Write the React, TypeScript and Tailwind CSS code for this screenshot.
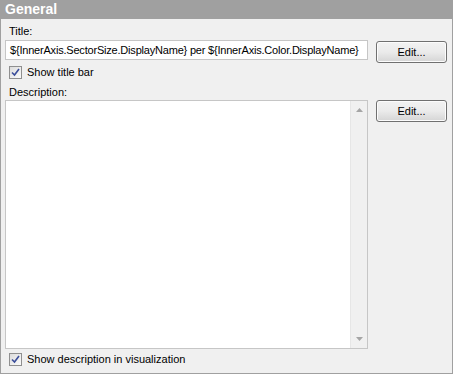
import React from "react";

function Check() {
  return (
    <div className="w-[13px] h-[13px] border border-[#8f8f8f] bg-gradient-to-br from-[#dcdcdc] to-[#fbfbfb] flex items-center justify-center shrink-0">
      <svg width="9" height="9" viewBox="0 0 9 9">
        <path d="M1 4.5 L3.5 7 L8 1" fill="none" stroke="#3a4d9a" strokeWidth="1.6" />
      </svg>
    </div>
  );
}

function EditButton() {
  return (
    <button className="w-[71px] h-[22px] rounded-[3px] border border-[#707070] bg-gradient-to-b from-[#f2f2f2] via-[#ebebeb] to-[#d5d5d5] text-[11px] text-black flex items-center justify-center shadow-[inset_0_0_0_1px_#fcfcfc]">
      Edit...
    </button>
  );
}

export default function App() {
  return (
    <div className="w-[453px] h-[374px] bg-[#f0f0f0] flex flex-col text-[11px] text-black" style={{ fontFamily: '"Liberation Sans", Arial, sans-serif' }}>
      <div className="h-[19px] bg-[#a0a0a0] text-white font-bold text-[14px] leading-[19px] pl-[5px] shrink-0">General</div>
      <div className="flex-1 border-x border-b border-[#a0a0a0] flex flex-col pl-[4px] pr-[4px] min-h-0">
        <div className="mt-[6px] ml-[4px] leading-[13px]">Title:</div>
        <div className="flex mt-[2px] gap-[8px] items-start">
          <div className="w-[363px] h-[20px] bg-white border border-[#c6c6c6] pl-[4px] leading-[18px] whitespace-nowrap overflow-hidden tracking-[-0.2px]">
            {"${InnerAxis.SectorSize.DisplayName} per ${InnerAxis.Color.DisplayName}"}
          </div>
          <div className="mt-[1px]"><EditButton /></div>
        </div>
        <div className="flex items-center gap-[5px] ml-[4px] mt-[3px] h-[13px]">
          <Check />
          <span>Show title bar</span>
        </div>
        <div className="mt-[7px] ml-[4px] leading-[13px]">Description:</div>
        <div className="flex mt-[1px] gap-[8px] items-start">
          <div className="w-[363px] h-[249px] bg-white border border-[#c6c6c6] flex justify-end">
            <div className="w-[17px] h-full bg-[#f0f0f0] border-l border-[#e6e6e6] flex flex-col items-center justify-between py-[7px]">
              <svg width="7" height="4" viewBox="0 0 7 4"><path d="M0 4 L3.5 0 L7 4 Z" fill="#a5a5a5" /></svg>
              <svg width="7" height="4" viewBox="0 0 7 4"><path d="M0 0 L3.5 4 L7 0 Z" fill="#a5a5a5" /></svg>
            </div>
          </div>
          <EditButton />
        </div>
        <div className="flex items-center gap-[5px] ml-[4px] mt-[4px] h-[13px]">
          <Check />
          <span>Show description in visualization</span>
        </div>
      </div>
    </div>
  );
}
